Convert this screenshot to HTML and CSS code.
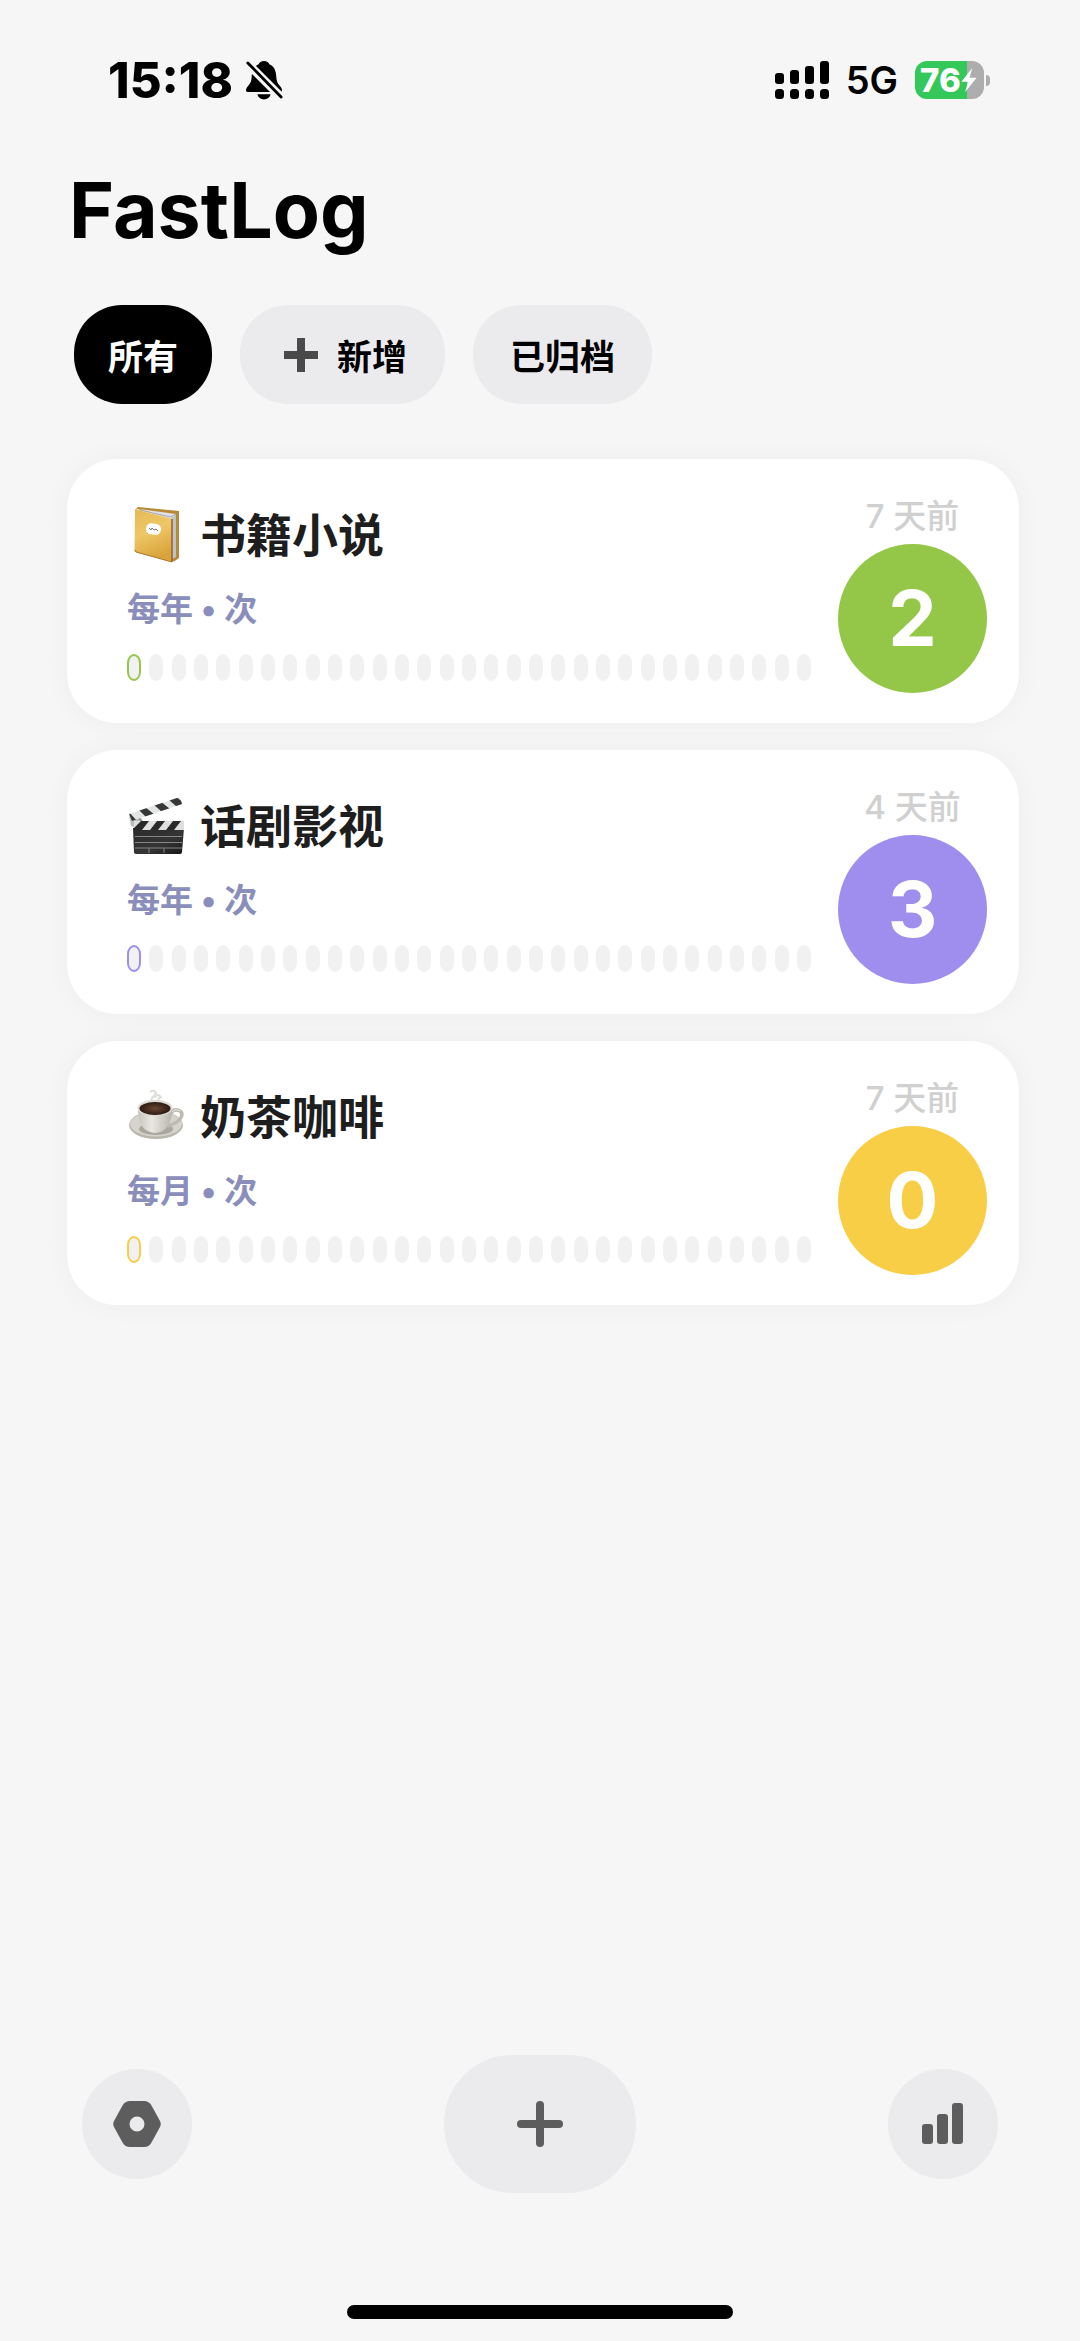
FILE: index.html
```html
<!DOCTYPE html>
<html lang="zh-CN">
<head>
<meta charset="utf-8">
<meta name="viewport" content="width=device-width, initial-scale=1">
<title>FastLog</title>
<link rel="stylesheet" href="styles.css">
</head>
<body>
<div class="screen">
  <div class="status">
    <div class="status-group">
      <span class="time">15:18</span>
      <svg class="bell" viewBox="0 0 40 42" aria-hidden="true">
        <path d="M20 1c-3 0-5 1.500-5.600 3.500C8.500 7 7.500 12 7 18c-.4 5-1.500 6.500-4 9.500C.5 30.500.3 33.500 3 33.500h34c2.700 0 2.500-3 0-6-2.500-3-3.600-4.500-4-9.500-.5-6-1.500-11-7.400-13.500C25 2.500 23 1 20 1zM13 36h14c-.8 3.500-3.500 5.500-7 5.500S13.800 39.500 13 36z"/>
        <path class="bell-gap" d="M2 3l37 37"/>
        <path class="bell-slash" d="M3 3l35 36"/>
      </svg>
    </div>
    <div class="status-group">
      <svg class="signal" viewBox="0 0 54 38" aria-hidden="true">
        <rect x="0" y="12" width="9" height="11" rx="3"/><rect x="15" y="9" width="9" height="14" rx="3"/><rect x="30" y="5" width="9" height="18" rx="3"/><rect x="45" y="0" width="9" height="23" rx="3"/>
        <rect x="0" y="28" width="9" height="10" rx="3.500"/><rect x="15" y="28" width="9" height="10" rx="3.500"/><rect x="30" y="28" width="9" height="10" rx="3.500"/><rect x="45" y="28" width="9" height="10" rx="3.500"/>
      </svg>
      <span class="network">5G</span>
      <div class="battery">
        <span class="battery-level">76</span>
        <svg class="bolt" viewBox="1 1 14 22" aria-hidden="true"><path d="M11 1L1 13.500h6L4.500 23 15 10H8.500z"/></svg>
      </div>
    </div>
  </div>

  <h1 class="title">FastLog</h1>

  <div class="filters">
    <button class="filter filter-active" type="button">所有</button>
    <button class="filter filter-add" type="button"><svg class="filter-plus" viewBox="0 0 34 34" aria-hidden="true"><path d="M13 0h8v13h13v8H21v13h-8V21H0v-8h13z"/></svg>新增</button>
    <button class="filter" type="button">已归档</button>
  </div>

  <main class="cards">
    <article class="card green">
      <div class="card-body">
        <h2 class="card-title">
          <svg class="emoji" viewBox="0 0 58 58" aria-hidden="true">
            <defs><linearGradient id="cover" x1="0" y1="0" x2="0.300" y2="1"><stop offset="0" stop-color="#e6ba55"/><stop offset="0.500" stop-color="#eec766"/><stop offset="1" stop-color="#d9a43c"/></linearGradient></defs>
            <path d="M9 2.500L11 1l41 4v47l-5 3.500-2-1V13z" fill="#b88a38"/>
            <path d="M12 3l37 5v43l-4 2V13z" fill="#dfe1e4"/>
            <path d="M46 11v42M48 9v43" stroke="#9fa3a8" stroke-width="1"/>
            <path d="M12 4l32 7 5-3" fill="none" stroke="#aaa" stroke-width="1"/>
            <path d="M8 3.500Q9 2 11 4l34 9v43L9 46q-1.500 0-1.500-2z" fill="url(#cover)"/>
            <path d="M45 13v43" stroke="#9d5c35" stroke-width="1.500"/>
            <path d="M8 44l1 2 36 10" fill="none" stroke="#ae7428"/>
            <rect x="19" y="17.500" width="15" height="11" rx="5" fill="#fff" transform="rotate(8 26 23)"/>
            <path d="M22 22l2 2 1-2 2 2 2-1 2 2" fill="none" stroke="#777"/>
          </svg>
          书籍小说
        </h2>
        <p class="period">每年 • 次</p>
        <div class="track"><i class="now"></i><i></i><i></i><i></i><i></i><i></i><i></i><i></i><i></i><i></i><i></i><i></i><i></i><i></i><i></i><i></i><i></i><i></i><i></i><i></i><i></i><i></i><i></i><i></i><i></i><i></i><i></i><i></i><i></i><i></i><i></i></div>
      </div>
      <div class="card-side">
        <p class="ago">7 天前</p>
        <button class="count" type="button">2</button>
      </div>
    </article>

    <article class="card purple">
      <div class="card-body">
        <h2 class="card-title">
          <svg class="emoji" viewBox="0 0 58 58" aria-hidden="true">
            <defs><linearGradient id="slate" x1="0" y1="0" x2="1" y2="1"><stop offset="0" stop-color="#2a2a2b"/><stop offset="0.600" stop-color="#353536"/><stop offset="1" stop-color="#171718"/></linearGradient>
            <clipPath id="arm"><path d="M2 17L53 0l2 7L5 24z"/></clipPath><clipPath id="clap"><path d="M7 24h50v9H7z"/></clipPath></defs>
            <path d="M2 17l11 2 5 8-3 5-11-3z" fill="#b9bbbb"/>
            <path d="M4 20l9 2 3 5" stroke="#777" fill="none"/>
            <g clip-path="url(#arm)"><path d="M0 0h58v26H0z" fill="#e3e4e4"/><path d="M2 15l8 9h-7zM11 12l7-2 10 8-8 3zM26 7l7-3 10 8-8 3zM41 2l7-3 10 8-8 3z" fill="#363737"/></g>
            <path d="M6 31h51l-2 24q0 2-3 2H10q-3 0-3-2z" fill="url(#slate)"/>
            <g clip-path="url(#clap)"><path d="M7 24h50v9H7z" fill="#dedfdf"/><path d="M14 24h8l-7 9H7v-2zM30 24h8l-7 9h-8zM46 24h8l-7 9h-8z" fill="#29292a"/></g>
            <path d="M8 39.500h47M8 45.500h47M8 51h47M22 51v5M37 51v5" stroke="#858586" stroke-width="1"/>
          </svg>
          话剧影视
        </h2>
        <p class="period">每年 • 次</p>
        <div class="track"><i class="now"></i><i></i><i></i><i></i><i></i><i></i><i></i><i></i><i></i><i></i><i></i><i></i><i></i><i></i><i></i><i></i><i></i><i></i><i></i><i></i><i></i><i></i><i></i><i></i><i></i><i></i><i></i><i></i><i></i><i></i><i></i></div>
      </div>
      <div class="card-side">
        <p class="ago">4 天前</p>
        <button class="count" type="button">3</button>
      </div>
    </article>

    <article class="card yellow">
      <div class="card-body">
        <h2 class="card-title">
          <svg class="emoji" viewBox="0 0 58 58" aria-hidden="true">
            <defs><linearGradient id="cup" x1="0" y1="0" x2="1" y2="0"><stop offset="0" stop-color="#c7c4bb"/><stop offset="0.400" stop-color="#e9e7e1"/><stop offset="1" stop-color="#b9b6ad"/></linearGradient>
            <radialGradient id="coffee"><stop offset="0" stop-color="#6b4631"/><stop offset="1" stop-color="#2c1a12"/></radialGradient></defs>
            <path d="M23 4q4-3 6 1-3 2-1 4 3-4 6 0-3 1-3 4M26 8q-3 4 1 7" fill="none" stroke="#deded9" stroke-width="2"/>
            <ellipse cx="29" cy="37" rx="27" ry="14" fill="#b9b6ae"/>
            <ellipse cx="29" cy="36" rx="26" ry="12.500" fill="#d5d3cb"/>
            <ellipse cx="29" cy="41" rx="17" ry="6" fill="#aaa79f"/>
            <path d="M44 25q3-5 9-2 4 3 0 8-3 4-12 7" fill="none" stroke="#bdbab2" stroke-width="3.500"/>
            <path d="M45 24q3-4 8-1" fill="none" stroke="#efede8" stroke-width="1"/>
            <path d="M11 21c0 10 3 18 8 21q4 3 9 3t9-3c5-3 8-11 8-21z" fill="url(#cup)"/>
            <ellipse cx="28" cy="20" rx="17.500" ry="8" fill="#dddbd4"/>
            <ellipse cx="28" cy="20.500" rx="15.500" ry="6.500" fill="url(#coffee)"/>
          </svg>
          奶茶咖啡
        </h2>
        <p class="period">每月 • 次</p>
        <div class="track"><i class="now"></i><i></i><i></i><i></i><i></i><i></i><i></i><i></i><i></i><i></i><i></i><i></i><i></i><i></i><i></i><i></i><i></i><i></i><i></i><i></i><i></i><i></i><i></i><i></i><i></i><i></i><i></i><i></i><i></i><i></i><i></i></div>
      </div>
      <div class="card-side">
        <p class="ago">7 天前</p>
        <button class="count" type="button">0</button>
      </div>
    </article>
  </main>

  <nav class="toolbar">
    <button class="tool" type="button" aria-label="设置">
      <svg class="tool-icon" viewBox="0 0 48 48" aria-hidden="true"><path fill-rule="evenodd" d="M17 1h14q5 0 7.500 4.500L47 21q1.500 3 0 6l-8.500 15.500Q36 47 31 47H17q-5 0-7.500-4.500L1 27q-1.500-3 0-6L9.500 5.500Q12 1 17 1zM24 16.500a7.500 7.500 0 1 0 0 15 7.500 7.500 0 0 0 0-15z"/></svg>
    </button>
    <button class="tool tool-main" type="button" aria-label="添加记录">
      <svg class="tool-icon" viewBox="0 0 48 48" aria-hidden="true"><rect x="1" y="20" width="46" height="8" rx="4"/><rect x="20" y="1" width="8" height="46" rx="4"/></svg>
    </button>
    <button class="tool" type="button" aria-label="统计">
      <svg class="tool-icon" viewBox="0 0 48 48" aria-hidden="true"><rect x="3" y="24" width="11" height="20" rx="3"/><rect x="18" y="14" width="11" height="30" rx="3"/><rect x="33" y="3" width="11" height="41" rx="3"/></svg>
    </button>
  </nav>
  <div class="home-bar"></div>
</div>
</body>
</html>
```
FILE: styles.css
```css
* {
  box-sizing: border-box;
}

body,
h1,
h2,
p {
  margin: 0;
}

body {
  background: #f6f6f6;
  color: #000;
  font-family: Inter, "Noto Sans CJK SC", sans-serif;
}

button {
  border: 0;
  padding: 0;
  color: inherit;
  font: inherit;
  cursor: pointer;
}

svg {
  display: block;
  flex: none;
}

.screen {
  display: flex;
  flex-direction: column;
  min-height: 100vh;
  padding-bottom: 22px;
}

/* Status bar */
.status {
  display: flex;
  justify-content: space-between;
  align-items: center;
  height: 160px;
  padding: 0 90px 0 108px;
}

.status-group {
  display: flex;
  align-items: center;
}

.time {
  font-size: 49px;
  font-weight: 800;
  font-optical-sizing: none;
}

.bell {
  width: 38px;
  height: 40px;
  margin-left: 12px;
}

.bell-gap,
.bell-slash {
  fill: none;
  stroke: #f6f6f6;
  stroke-width: 9;
}

.bell-slash {
  stroke: #000;
  stroke-width: 3;
  stroke-linecap: round;
}

.signal {
  width: 54px;
  height: 38px;
}

.network {
  margin: 0 17px;
  font-size: 38px;
  font-weight: 600;
}

.battery {
  position: relative;
  display: flex;
  align-items: center;
  width: 69px;
  height: 38px;
  margin-right: 6px;
  padding-left: 5px;
  border-radius: 12px;
  background: linear-gradient(to right, #34c759 76%, #adadad 76%);
  color: #fff;
}

.battery::after {
  content: "";
  position: absolute;
  right: -6px;
  top: 14px;
  width: 4px;
  height: 11px;
  border-radius: 0 4px 4px 0;
  background: #adadad;
}

.battery-level {
  font-size: 33px;
  font-weight: 800;
  font-optical-sizing: none;
  line-height: 38px;
}

.bolt {
  width: 16px;
  height: 24px;
  fill: #fff;
}

/* Heading and filters */
.title {
  padding: 0 69px;
  font-size: 77px;
  font-weight: 700;
  line-height: 100px;
}

.filters {
  display: flex;
  flex-wrap: wrap;
  gap: 28px;
  padding: 45px 74px 55px;
}

.filter {
  display: flex;
  align-items: center;
  height: 99px;
  padding: 0 37px;
  border-radius: 48px;
  background: #ebebed;
  font-size: 35px;
  font-weight: 700;
}

.filter-active {
  padding: 0 34px;
  background: #000;
  color: #fff;
}

.filter-add {
  gap: 19px;
  padding: 0 38px 0 44px;
}

.filter-plus {
  width: 34px;
  height: 34px;
  fill: #4a4a4a;
}

/* Cards */
.cards {
  display: flex;
  flex-direction: column;
  gap: 27px;
  padding: 0 61px 0 67px;
}

.card {
  display: flex;
  gap: 27px;
  height: 264px;
  padding: 36px 32px 0 60px;
  border-radius: 50px;
  background: #fff;
  box-shadow: 0 0 28px rgba(0, 0, 0, 0.04);
}

.green { --accent: #94c748; }
.purple { --accent: #9f8eee; }
.yellow { --accent: #f8ce46; }

.card-body {
  flex: 1;
  min-width: 0;
}

.card-title {
  display: flex;
  align-items: center;
  gap: 15px;
  height: 80px;
  color: #1e1e1e;
  font-size: 46px;
  font-weight: 700;
  line-height: 80px;
}

.emoji {
  width: 58px;
  height: 58px;
}

.period {
  height: 79px;
  color: #8a8eba;
  font-size: 33px;
  font-weight: 700;
  line-height: 68px;
}

.track {
  display: flex;
  justify-content: space-between;
}

.track i {
  width: 14px;
  height: 27px;
  border-radius: 7px / 9px;
  background: #f1f1f1;
}

.track .now {
  border: 2px solid var(--accent);
}

.card-side {
  display: flex;
  flex-direction: column;
  align-items: center;
}

.ago {
  height: 49px;
  color: #d0d0d0;
  font-size: 33px;
  font-weight: 500;
  line-height: 42px;
}

.count {
  width: 149px;
  height: 149px;
  border-radius: 50%;
  background: var(--accent);
  color: #fff;
  font-size: 77px;
  font-weight: 700;
  line-height: 149px;
}

/* Bottom toolbar */
.toolbar {
  display: flex;
  justify-content: space-between;
  align-items: center;
  margin-top: auto;
  padding: 0 82px 112px;
}

.tool {
  display: grid;
  place-items: center;
  width: 110px;
  height: 110px;
  border-radius: 68px;
  background: #ebebed;
}

.tool-main {
  width: 192px;
  height: 138px;
}

.tool-icon {
  width: 48px;
  height: 48px;
  fill: #5d5d5d;
}

.home-bar {
  width: 386px;
  height: 14px;
  margin: 0 auto;
  border-radius: 7px;
  background: #000;
}
```
